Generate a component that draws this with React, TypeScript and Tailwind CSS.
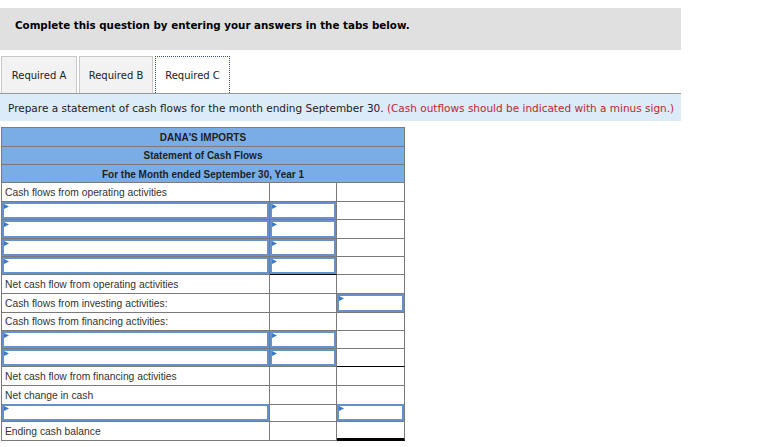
import React from 'react'

type Cell = { kind: 'text' | 'input' | 'empty'; text?: string; bottom?: 'black' | 'double' }
type Row = { h: number; cells: [Cell, Cell, Cell] }

const E: Cell = { kind: 'empty' }
const I: Cell = { kind: 'input' }
const T = (text: string): Cell => ({ kind: 'text', text })

const rows: Row[] = [
  { h: 19, cells: [T('Cash flows from operating activities'), E, E] },
  { h: 18, cells: [I, I, E] },
  { h: 19, cells: [I, I, E] },
  { h: 18, cells: [I, I, E] },
  { h: 18, cells: [I, { kind: 'input', bottom: 'black' }, E] },
  { h: 19, cells: [T('Net cash flow from operating activities'), E, E] },
  { h: 18, cells: [T('Cash flows from investing activities:'), E, I] },
  { h: 19, cells: [T('Cash flows from financing activities:'), E, E] },
  { h: 18, cells: [I, I, E] },
  { h: 18, cells: [I, I, { kind: 'empty', bottom: 'black' }] },
  { h: 19, cells: [T('Net cash flow from financing activities'), E, E] },
  { h: 18, cells: [T('Net change in cash'), E, E] },
  { h: 18, cells: [I, E, I] },
  { h: 19, cells: [T('Ending cash balance'), E, { kind: 'empty', bottom: 'double' }] },
]

function Flag() {
  return (
    <svg className="absolute left-0 top-0" width="5" height="5" viewBox="0 0 5 5">
      <polygon points="0,0 5,2.5 0,5" fill="#3b78c9" />
    </svg>
  )
}

function BodyCell({ cell }: { cell: Cell }) {
  const bottom =
    cell.bottom === 'black'
      ? 'border-b-black'
      : cell.bottom === 'double'
        ? 'border-b-[3px] border-b-black'
        : ''
  return (
    <div className={`relative border-b border-r border-[#7a7a7a] ${bottom}`}>
      {cell.kind === 'text' && (
        <div className="truncate pl-[3px] pt-px text-[10.3px] leading-[17px] text-[#333]">{cell.text}</div>
      )}
      {cell.kind === 'input' && (
        <div className="relative h-full border-2 border-[#6592cc] bg-white">
          <Flag />
        </div>
      )}
    </div>
  )
}

export default function App() {
  return (
    <div className="h-[447px] w-[758px] overflow-hidden bg-white pt-2">
      <div className="h-[42px] w-[681px] bg-[#e0e0e0] pl-[15px] pt-[10px] font-['DejaVu_Sans',sans-serif] text-[10.3px] font-bold leading-[14px] text-black">
        Complete this question by entering your answers in the tabs below.
      </div>

      <div className="mt-[6px] flex h-[37px] w-[681px] items-end gap-[2px] pl-px font-['DejaVu_Sans',sans-serif] text-[10px] text-[#222]">
        <div className="flex h-[37px] w-[76px] items-center justify-center border border-b-0 border-[#c8c8c8] bg-[#f2f2f2]">Required A</div>
        <div className="flex h-[37px] w-[74px] items-center justify-center border border-b-0 border-[#c8c8c8] bg-[#f2f2f2]">Required B</div>
        <div className="flex h-[37px] w-[75px] items-center justify-center border border-b-0 border-dotted border-[#334d80] bg-white">Required C</div>
      </div>

      <div className="flex h-[28px] w-[681px] items-center border-t border-[#999] bg-[#dcebf8] pl-2 pt-[2px] font-['DejaVu_Sans',sans-serif] text-[10.5px] text-[#222]">
        <span>Prepare a statement of cash flows for the month ending September 30.&nbsp;</span>
        <span className="text-[#c1272d]">(Cash outflows should be indicated with a minus sign.)</span>
      </div>

      <div className="ml-px mt-[6px] w-[404px] border-l border-t border-[#7a7a7a] font-['Liberation_Sans',Arial,sans-serif] text-[10px]">
        <div className="flex h-[19px] items-center justify-center border-b border-r border-[#7a7a7a] bg-[#7aade6] font-bold text-[#1f1f1f]">DANA'S IMPORTS</div>
        <div className="flex h-[18px] items-center justify-center border-b border-r border-[#7a7a7a] bg-[#7aade6] font-bold text-[#1f1f1f]">Statement of Cash Flows</div>
        <div className="flex h-[18px] items-center justify-center border-b border-r border-[#7a7a7a] bg-[#7aade6] pt-px font-bold text-[#1f1f1f]">For the Month ended September 30, Year 1</div>
        {rows.map((r, i) => (
          <div key={i} className="grid grid-cols-[268px_67px_68px]" style={{ height: r.h }}>
            <BodyCell cell={r.cells[0]} />
            <BodyCell cell={r.cells[1]} />
            <BodyCell cell={r.cells[2]} />
          </div>
        ))}
      </div>
    </div>
  )
}
